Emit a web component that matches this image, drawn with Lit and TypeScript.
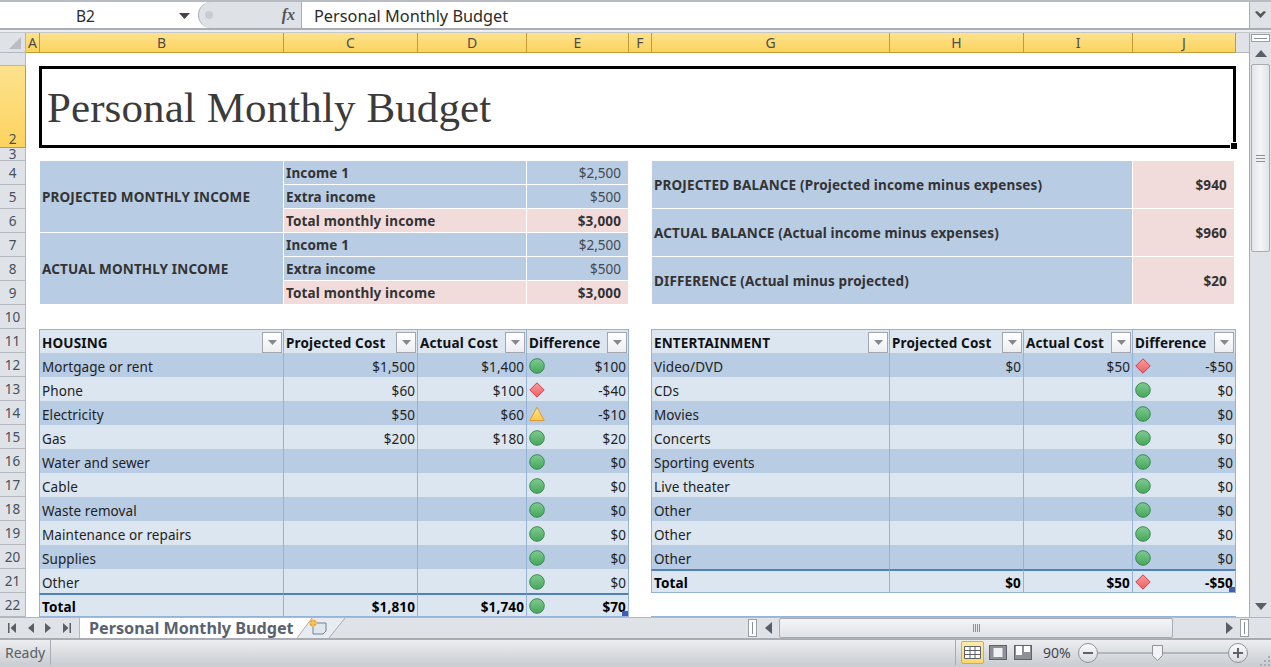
import { LitElement, html, css, svg, nothing } from 'lit';
import { customElement } from 'lit/decorators.js';

type Status = 'ok' | 'bad' | 'warn';
interface Row {
  label: string;
  projected?: string;
  actual?: string;
  diff: string;
  status: Status;
}

const COLS = ['A', 'B', 'C', 'D', 'E', 'F', 'G', 'H', 'I', 'J'];

const HOUSING: Row[] = [
  { label: 'Mortgage or rent', projected: '$1,500', actual: '$1,400', diff: '$100', status: 'ok' },
  { label: 'Phone', projected: '$60', actual: '$100', diff: '-$40', status: 'bad' },
  { label: 'Electricity', projected: '$50', actual: '$60', diff: '-$10', status: 'warn' },
  { label: 'Gas', projected: '$200', actual: '$180', diff: '$20', status: 'ok' },
  { label: 'Water and sewer', diff: '$0', status: 'ok' },
  { label: 'Cable', diff: '$0', status: 'ok' },
  { label: 'Waste removal', diff: '$0', status: 'ok' },
  { label: 'Maintenance or repairs', diff: '$0', status: 'ok' },
  { label: 'Supplies', diff: '$0', status: 'ok' },
  { label: 'Other', diff: '$0', status: 'ok' },
];

const FUN: Row[] = [
  { label: 'Video/DVD', projected: '$0', actual: '$50', diff: '-$50', status: 'bad' },
  { label: 'CDs', diff: '$0', status: 'ok' },
  { label: 'Movies', diff: '$0', status: 'ok' },
  { label: 'Concerts', diff: '$0', status: 'ok' },
  { label: 'Sporting events', diff: '$0', status: 'ok' },
  { label: 'Live theater', diff: '$0', status: 'ok' },
  { label: 'Other', diff: '$0', status: 'ok' },
  { label: 'Other', diff: '$0', status: 'ok' },
  { label: 'Other', diff: '$0', status: 'ok' },
];

const statusIcon = (s: Status) => {
  if (s === 'ok') {
    return html`<svg class="cf" viewBox="0 0 16 16"><defs><linearGradient id="g" x1="0" y1="0" x2="0" y2="1"><stop offset="0" stop-color="#7fcb8f"/><stop offset="1" stop-color="#45a65c"/></linearGradient></defs><circle cx="8" cy="8" r="7.3" fill="url(#g)" stroke="#3d8a52"/></svg>`;
  }
  if (s === 'bad') {
    return html`<svg class="cf" viewBox="0 0 16 16"><defs><linearGradient id="r" x1="0" y1="0" x2="0" y2="1"><stop offset="0" stop-color="#fb9a9a"/><stop offset="1" stop-color="#ee5f66"/></linearGradient></defs><path d="M8 .8 15.2 8 8 15.2 .8 8Z" fill="url(#r)" stroke="#c8434b"/></svg>`;
  }
  return html`<svg class="cf" viewBox="0 0 16 16"><defs><linearGradient id="y" x1="0" y1="0" x2="0" y2="1"><stop offset="0" stop-color="#ffe58a"/><stop offset="1" stop-color="#fcc64a"/></linearGradient></defs><path d="M8 1.2 15.2 14.6H.8Z" fill="url(#y)" stroke="#e0982a"/></svg>`;
};

const tri = (d: string) => svg`<path d=${d} fill="#5a5f66"/>`;

@customElement('app-root')
export class AppRoot extends LitElement {
  static override styles = css`
    :host {
      display: flex;
      flex-direction: column;
      width: 1271px;
      height: 667px;
      overflow: hidden;
      background: #fff;
      font-family: 'Noto Sans', sans-serif;
      font-size: 13.5px;
      color: #222;
    }
    svg { display: block; }

    /* formula bar */
    .fbar {
      display: flex;
      height: 30px;
      flex: none;
      box-sizing: border-box;
      border-top: 2px solid #b8bcc2;
      border-bottom: 2px solid #a9adb3;
      background: #fff;
      font-size: 16.3px;
      color: #2b2b2b;
    }
    .namebox {
      width: 198px;
      flex: none;
      display: flex;
      align-items: center;
      box-sizing: border-box;
      padding: 1px 8px 0 76px;
      justify-content: space-between;
      font-size: 15.5px;
    }
    .fxwrap {
      width: 104px;
      flex: none;
      box-sizing: border-box;
      display: flex;
      align-items: center;
      justify-content: space-between;
      padding: 0 6px 0 6px;
      background: #dee1e6;
      border-left: 1px solid #a9adb3;
      border-right: 1px solid #a9adb3;
      border-radius: 14px 0 0 14px;
    }
    .fxdot { width: 8px; height: 8px; border-radius: 50%; background: #c8ccd2; }
    .fx { font-family: 'Liberation Serif', serif; font-style: italic; font-weight: 700; font-size: 16px; color: #555; }
    .formula { flex: 1; padding: 1px 0 0 12px; display: flex; align-items: center; }
    .expand {
      width: 21px;
      flex: none;
      display: flex;
      align-items: center;
      justify-content: center;
      background: #dee1e6;
      border-left: 1px solid #a9adb3;
    }
    .gapline { height: 3px; flex: none; background: #eceef1; border-bottom: 1px solid #c4c7cc; box-sizing: border-box; }

    /* sheet */
    .main { display: flex; flex: none; height: 584px; }
    .sheet {
      width: 1249px;
      height: 584px;
      flex: none;
      display: grid;
      grid-template-columns: 26px 14px 244px 134px 109px 102px 23px 238px 134px 109px 103px 13px;
      grid-template-rows: 20px 13px 82px 13px repeat(19, 24px);
      background: #fff;
    }
    .corner {
      grid-row: 1;
      grid-column: 1;
      background: #dfe3e8;
      border-right: 1px solid #b4b8be;
      border-bottom: 1px solid #b4b8be;
      display: flex;
      align-items: flex-end;
      justify-content: flex-end;
      padding: 0 4px 3px 0;
    }
    .filler { grid-row: 1; grid-column: 12; background: #dfe3e8; border-bottom: 1px solid #b4b8be; }
    .ch {
      grid-row: 1;
      display: flex;
      align-items: center;
      justify-content: center;
      font-size: 14px;
      color: #4d4d4d;
      background: linear-gradient(#fde28d, #fcd35f);
      border-right: 1px solid #c49a36;
      border-bottom: 1px solid #c49a36;
      box-sizing: border-box;
    }
    .rh {
      grid-column: 1;
      display: flex;
      align-items: center;
      justify-content: center;
      font-size: 13.5px;
      line-height: 11px;
      padding-top: 1px;
      color: #46505c;
      background: #dfe3e8;
      border-right: 1px solid #b4b8be;
      border-bottom: 1px solid #b4b8be;
      box-sizing: border-box;
      overflow: hidden;
    }
    .rh.sel {
      background: linear-gradient(#fde28d, #fcd35f);
      border-color: #c49a36;
      align-items: flex-end;
      padding-bottom: 2px;
    }
    .title {
      grid-row: 3;
      grid-column: 3 / 12;
      position: relative;
      margin: 0 0 0 -1px;
      border: 3px solid #000;
      display: flex;
      align-items: center;
      padding-left: 5px;
      box-sizing: border-box;
      font-family: 'Liberation Serif', serif;
      font-size: 43px;
      letter-spacing: 0.1px;
      color: #3b3b3b;
      z-index: 1;
    }
    .handle {
      position: absolute;
      right: -5px;
      bottom: -5px;
      width: 6px;
      height: 6px;
      background: #000;
      border: 1px solid #fff;
    }

    .c {
      display: flex;
      align-items: center;
      box-sizing: border-box;
      padding: 0 2px;
      min-width: 0;
      white-space: nowrap;
      overflow: hidden;
    }
    .r { justify-content: flex-end; }
    .top {
      background: #b8cce4;
      border-right: 1px solid #fff;
      border-bottom: 1px solid #fff;
      font-weight: 700;
      letter-spacing: 0.15px;
      color: #333;
    }
    .top.val { font-weight: 400; letter-spacing: 0; color: #44494f; padding-right: 7px; }
    .top.pink { background: #f2dcdb; font-weight: 700; color: #333; }
    .bal { padding-right: 7px; }
    .edge { margin-right: 1px; }

    .t {
      border-right: 1px solid #95b3d7;
      padding-top: 4px;
      letter-spacing: 0.08px;
      color: #222;
    }
    .t.first { border-left: 1px solid #95b3d7; margin-left: -1px; }
    .t.dark { background: #b8cce4; }
    .t.light { background: #dce6f1; }
    .t.head {
      background: #dce6f1;
      border-top: 1px solid #95b3d7;
      font-weight: 700;
      letter-spacing: 0.15px;
      color: #111;
      justify-content: space-between;
      padding-right: 1px;
      padding-top: 2px;
    }
    .t.total {
      background: #dce6f1;
      border-top: 2px solid #4f81bd;
      border-bottom: 1px solid #95b3d7;
      font-weight: 700;
      letter-spacing: 0.15px;
      color: #000;
      padding-top: 3px;
    }
    .t.diff { justify-content: space-between; padding-left: 2px; padding-right: 2px; position: relative; }
    .corner-mark {
      position: absolute;
      right: 0;
      bottom: 0;
      width: 6px;
      height: 5px;
      background: #3f5fb0;
    }
    .cf { width: 16px; height: 16px; flex: none; margin-top: -3px; }
    .fb {
      width: 20px;
      height: 21px;
      flex: none;
      margin-top: -1px;
      box-sizing: border-box;
      border: 1px solid #a3a7ad;
      background: linear-gradient(#fff, #eceef1);
      display: flex;
      align-items: center;
      justify-content: center;
    }
    .below { grid-row: 23; grid-column: 8 / 12; border-bottom: 1px solid #95b3d7; margin-left: -1px; }

    /* vertical scroll */
    .vscroll {
      width: 22px;
      flex: none;
      box-sizing: border-box;
      background: #dfe3e8;
      border-left: 1px solid #a9adb3;
      display: flex;
      flex-direction: column;
      align-items: center;
    }
    .vsplit {
      width: 19px;
      height: 8px;
      flex: none;
      margin-top: 1px;
      border: 1px solid #9a9ea5;
      background: #fff;
      box-sizing: border-box;
      display: flex;
      align-items: center;
      padding: 0 2px;
    }
    .vsplit i { display: block; height: 1px; flex: 1; background: #8b8f96; }
    .vup { height: 20px; flex: none; display: flex; align-items: center; justify-content: center; margin-top: 1px; }
    .vthumb {
      width: 19px;
      height: 188px;
      flex: none;
      margin-top: 1px;
      box-sizing: border-box;
      border: 1px solid #a9adb3;
      border-radius: 2px;
      background: linear-gradient(90deg, #e2e5ea, #f4f5f7 50%, #dfe2e7);
      display: flex;
      align-items: center;
      justify-content: center;
    }
    .vtrack { flex: 1; }
    .vdown { height: 22px; flex: none; display: flex; align-items: center; justify-content: center; }

    /* tab strip */
    .tabs {
      display: flex;
      flex: none;
      height: 21px;
      background: #dfe3e8;
      box-sizing: border-box;
      border-top: 1px solid #b4b8be;
    }
    .nav { width: 80px; flex: none; display: flex; align-items: center; justify-content: space-around; padding: 0 2px; box-sizing: border-box; border-right: 1px solid #b4b8be; }
    .tab {
      width: 217px;
      flex: none;
      box-sizing: border-box;
      background: #fff;
      font-weight: 700;
      font-size: 16.2px;
      line-height: 20px;
      color: #5a6270;
      display: flex;
      align-items: center;
      padding: 0 0 0 9px;
      white-space: nowrap;
    }
    .newtab { width: 48px; flex: none; }
    .tabfill { width: 403px; flex: none; }
    .hsplit { width: 9px; flex: none; margin: 1px 0; box-sizing: border-box; border: 1px solid #9a9ea5; background: #fff; display: flex; justify-content: center; padding: 2px 0; }
    .hsplit i { display: block; width: 1px; background: #8b8f96; }
    .harrow { width: 21px; flex: none; display: flex; align-items: center; justify-content: center; }
    .harrow.left { width: 22px; }
    .hthumb {
      width: 394px;
      flex: none;
      box-sizing: border-box;
      border: 1px solid #a9adb3;
      border-radius: 2px;
      background: linear-gradient(#f3f4f6, #dfe2e7);
      display: flex;
      align-items: center;
      justify-content: center;
    }
    .htrack { width: 46px; flex: none; }

    /* status bar */
    .status {
      flex: 1;
      display: flex;
      align-items: center;
      box-sizing: border-box;
      padding-bottom: 2px;
      border-top: 2px solid #a9adb3;
      background: linear-gradient(#eceef0, #c8cbd0);
      font-size: 14px;
      color: #5a5f66;
    }
    .ready { width: 51px; padding-left: 5px; box-sizing: border-box; border-right: 1px solid #a9adb3; align-self: stretch; display: flex; align-items: center; flex: none; }
    .sspace { width: 905px; flex: none; align-self: stretch; border-right: 1px solid #a9adb3; box-sizing: border-box; }
    .views { display: flex; gap: 2px; margin-left: 5px; flex: none; align-items: center; }
    .vw { width: 23px; height: 23px; flex: none; display: flex; align-items: center; justify-content: center; box-sizing: border-box; }
    .vw.on { border: 1px solid #e0a93c; border-radius: 2px; background: linear-gradient(#fdeca8, #fcd76b); }
    .pct { margin-left: 9px; width: 35px; flex: none; color: #3f4650; }
    .zoomrow { display: flex; align-items: center; flex: none; }
    .zb {
      width: 20px;
      height: 20px;
      flex: none;
      border-radius: 50%;
      box-sizing: border-box;
      border: 1px solid #8f9399;
      background: linear-gradient(#fbfbfc, #d8dade);
      display: flex;
      align-items: center;
      justify-content: center;
    }
    .slider { width: 130px; height: 14px; flex: none; position: relative; display: flex; align-items: center; }
    .slider b { display: block; height: 2px; flex: 1; background: #b2b5ba; }
    .knob { position: absolute; left: 54px; top: -1px; }
    .grip { margin-left: auto; align-self: flex-end; margin-right: 1px; margin-bottom: -1px; }
  `;

  private place(col: number, row: number, colSpan = 1, rowSpan = 1) {
    return `grid-area:${row + 1} / ${col} / span ${rowSpan} / span ${colSpan}`;
  }

  private filterBtn() {
    return html`<span class="fb"><svg width="9" height="5" viewBox="0 0 9 5"><path d="M0 0H9L4.5 5Z" fill="#85898f"/></svg></span>`;
  }

  private table(col: number, name: string, rows: Row[], total: [string, string, string], totalStatus: Status) {
    const startRow = 11;
    const headers = [name, 'Projected Cost', 'Actual Cost', 'Difference'];
    const totalRow = startRow + rows.length + 1;
    return html`
      ${headers.map(
        (h, i) => html`<div class="c t head ${i === 0 ? 'first' : ''}" style=${this.place(col + i, startRow)}>
          <span>${h}</span>${this.filterBtn()}
        </div>`
      )}
      ${rows.map((r, i) => {
        const row = startRow + 1 + i;
        const band = i % 2 === 0 ? 'dark' : 'light';
        return html`
          <div class="c t first ${band}" style=${this.place(col, row)}>${r.label}</div>
          <div class="c r t ${band}" style=${this.place(col + 1, row)}>${r.projected ?? nothing}</div>
          <div class="c r t ${band}" style=${this.place(col + 2, row)}>${r.actual ?? nothing}</div>
          <div class="c t diff ${band}" style=${this.place(col + 3, row)}>${statusIcon(r.status)}<span>${r.diff}</span></div>
        `;
      })}
      <div class="c t first total" style=${this.place(col, totalRow)}>Total</div>
      <div class="c r t total" style=${this.place(col + 1, totalRow)}>${total[0]}</div>
      <div class="c r t total" style=${this.place(col + 2, totalRow)}>${total[1]}</div>
      <div class="c t total diff" style=${this.place(col + 3, totalRow)}>
        ${statusIcon(totalStatus)}<span>${total[2]}</span><i class="corner-mark"></i>
      </div>
    `;
  }

  private incomeBlock(row: number, title: string) {
    return html`
      <div class="c top" style=${this.place(3, row, 1, 3)}>${title}</div>
      <div class="c top" style=${this.place(4, row, 2)}>Income 1</div>
      <div class="c r top val" style=${this.place(6, row)}>$2,500</div>
      <div class="c top" style=${this.place(4, row + 1, 2)}>Extra income</div>
      <div class="c r top val" style=${this.place(6, row + 1)}>$500</div>
      <div class="c top pink" style=${this.place(4, row + 2, 2)}>Total monthly income</div>
      <div class="c r top pink bal" style=${this.place(6, row + 2)}>$3,000</div>
    `;
  }

  private balance(row: number, label: string, value: string) {
    return html`
      <div class="c top" style=${this.place(8, row, 3, 2)}>${label}</div>
      <div class="c r top pink bal edge" style=${this.place(11, row, 1, 2)}>${value}</div>
    `;
  }

  override render() {
    const rowNums = Array.from({ length: 22 }, (_, i) => i + 1);
    return html`
      <div class="fbar">
        <div class="namebox">
          <span>B2</span>
          <svg width="11" height="6" viewBox="0 0 11 6"><path d="M0 0H11L5.5 6Z" fill="#444"/></svg>
        </div>
        <div class="fxwrap"><i class="fxdot"></i><span class="fx">fx</span></div>
        <div class="formula">Personal Monthly Budget</div>
        <div class="expand">
          <svg width="11" height="8" viewBox="0 0 11 8"><path d="M0 1 2 0 5.5 3 9 0 11 1 5.5 7Z" fill="#555"/></svg>
        </div>
      </div>
      <div class="gapline"></div>
      <div class="main">
        <div class="sheet">
          <div class="corner">
            <svg width="12" height="12" viewBox="0 0 12 12"><path d="M12 0V12H0Z" fill="#b9bdc3"/></svg>
          </div>
          ${COLS.map(
            (c, i) => html`<div class="ch" style="grid-column:${i + 2}">${c}</div>`
          )}
          <div class="filler"></div>
          ${rowNums.map(
            n => html`<div class="rh ${n === 2 ? 'sel' : ''}" style="grid-row:${n + 1}">${n === 1 ? nothing : n}</div>`
          )}
          <div class="title">Personal Monthly Budget<i class="handle"></i></div>

          ${this.incomeBlock(4, 'PROJECTED MONTHLY INCOME')}
          ${this.incomeBlock(7, 'ACTUAL MONTHLY INCOME')}
          ${this.balance(4, 'PROJECTED BALANCE (Projected income minus expenses)', '$940')}
          ${this.balance(6, 'ACTUAL BALANCE (Actual income minus expenses)', '$960')}
          ${this.balance(8, 'DIFFERENCE (Actual minus projected)', '$20')}

          ${this.table(3, 'HOUSING', HOUSING, ['$1,810', '$1,740', '$70'], 'ok')}
          ${this.table(8, 'ENTERTAINMENT', FUN, ['$0', '$50', '-$50'], 'bad')}
          <div class="below"></div>
        </div>
        <div class="vscroll">
          <div class="vsplit"><i></i></div>
          <div class="vup"><svg width="12" height="7" viewBox="0 0 12 7">${tri('M6 0 12 7H0Z')}</svg></div>
          <div class="vthumb">
            <svg width="9" height="7" viewBox="0 0 9 7"><path d="M0 .5H9M0 3.5H9M0 6.5H9" stroke="#8b8f96"/></svg>
          </div>
          <div class="vtrack"></div>
          <div class="vdown"><svg width="12" height="7" viewBox="0 0 12 7">${tri('M0 0H12L6 7Z')}</svg></div>
        </div>
      </div>
      <div class="tabs">
        <div class="nav">
          <svg width="8" height="10" viewBox="0 0 8 10">${tri('M0 0H1.5V10H0ZM8 0V10L2.5 5Z')}</svg>
          <svg width="6" height="10" viewBox="0 0 6 10">${tri('M6 0V10L0 5Z')}</svg>
          <svg width="6" height="10" viewBox="0 0 6 10">${tri('M0 0V10L6 5Z')}</svg>
          <svg width="8" height="10" viewBox="0 0 8 10">${tri('M0 0V10L5.5 5ZM6.5 0H8V10H6.5Z')}</svg>
        </div>
        <div class="tab">Personal Monthly Budget</div>
        <div class="newtab">
          <svg width="48" height="20" viewBox="0 0 48 20">
            <path d="M0 0H15L0 20Z" fill="#fff"/>
            <path d="M15 0H48L32 20H0Z" fill="#e8ebef"/>
            <path d="M15 0 0 20M48 0 32 20" stroke="#a9adb3" fill="none"/>
            <path d="M16 5H29V13L26 16H16Z" fill="#dfe6ee" stroke="#6f8298"/>
            <circle cx="16" cy="5" r="3.6" fill="#f0a830"/>
            <path d="M16 1V9M12 5H20" stroke="#f7d27a"/>
          </svg>
        </div>
        <div class="tabfill"></div>
        <div class="hsplit"><i></i></div>
        <div class="harrow left"><svg width="7" height="12" viewBox="0 0 7 12">${tri('M7 0V12L0 6Z')}</svg></div>
        <div class="hthumb">
          <svg width="7" height="8" viewBox="0 0 7 8"><path d="M.5 0V8M2.5 0V8M4.5 0V8M6.5 0V8" stroke="#8b8f96"/></svg>
        </div>
        <div class="htrack"></div>
        <div class="harrow"><svg width="7" height="12" viewBox="0 0 7 12">${tri('M0 0V12L7 6Z')}</svg></div>
        <div class="hsplit"><i></i></div>
      </div>
      <div class="status">
        <div class="ready">Ready</div>
        <div class="sspace"></div>
        <div class="views">
          <div class="vw on">
            <svg width="17" height="13" viewBox="0 0 17 13"><path d="M.5.5H16.5V12.5H.5ZM.5 4.5H16.5M.5 8.5H16.5M6 .5V12.5M11 .5V12.5" fill="#fff" stroke="#5f6369"/></svg>
          </div>
          <div class="vw">
            <svg width="18" height="15" viewBox="0 0 18 15"><rect x=".5" y=".5" width="17" height="14" fill="#8d9096" stroke="#5f6369"/><rect x="4" y="2.5" width="10" height="10" fill="#eef0f2" stroke="#8b8f96"/></svg>
          </div>
          <div class="vw">
            <svg width="18" height="15" viewBox="0 0 18 15"><rect x=".5" y=".5" width="17" height="14" fill="#8d9096" stroke="#5f6369"/><path d="M2 1H8V10H2ZM10 1H16V7H10Z" fill="#fff"/></svg>
          </div>
        </div>
        <div class="pct">90%</div>
        <div class="zoomrow">
          <div class="zb"><svg width="10" height="2" viewBox="0 0 10 2"><path d="M0 0H10V2H0Z" fill="#5f6369"/></svg></div>
          <div class="slider">
            <b></b>
            <svg class="knob" width="11" height="16" viewBox="0 0 11 16"><path d="M.5.5H10.5V10.5L5.5 15.5.5 10.5Z" fill="#f2f3f5" stroke="#8f9399"/></svg>
          </div>
          <div class="zb"><svg width="10" height="10" viewBox="0 0 10 10"><path d="M4 0H6V4H10V6H6V10H4V6H0V4H4Z" fill="#5f6369"/></svg></div>
        </div>
        <svg class="grip" width="10" height="10" viewBox="0 0 10 10"><path d="M8 0h2v2H8zM4 4h2v2H4zM8 4h2v2H8zM0 8h2v2H0zM4 8h2v2H4zM8 8h2v2H8z" fill="#a9adb3"/></svg>
      </div>
    `;
  }
}

declare global {
  interface HTMLElementTagNameMap {
    'app-root': AppRoot;
  }
}
